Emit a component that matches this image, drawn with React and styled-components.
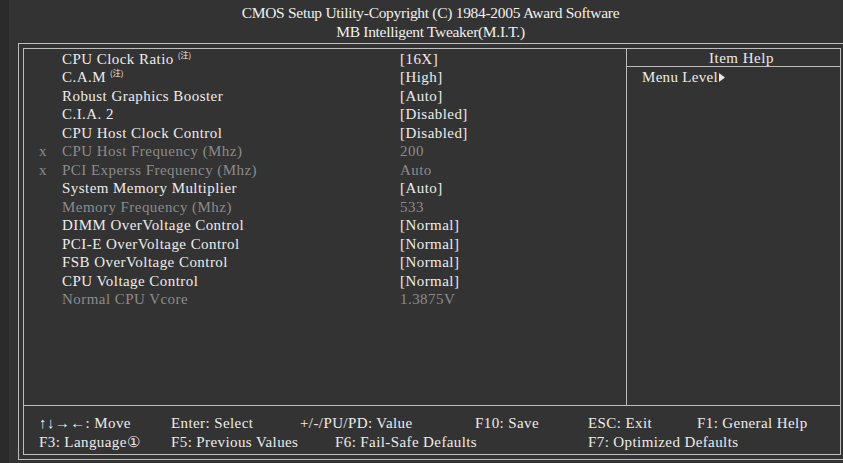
import React from 'react'
import styled, { createGlobalStyle } from 'styled-components'

const GlobalStyle = createGlobalStyle`
  html, body {
    margin: 0;
    padding: 0;
    background: #2b2b2b;
  }
  body {
    font-family: "Liberation Serif", "Times New Roman", serif;
    overflow: hidden;
  }
`

const rows = [
  { label: 'CPU Clock Ratio', note: true, value: '[16X]' },
  { label: 'C.A.M', note: true, value: '[High]' },
  { label: 'Robust Graphics Booster', value: '[Auto]' },
  { label: 'C.I.A. 2', value: '[Disabled]' },
  { label: 'CPU Host Clock Control', value: '[Disabled]' },
  { label: 'CPU Host Frequency (Mhz)', value: '200', dim: true, locked: true },
  { label: 'PCI Experss Frequency (Mhz)', value: 'Auto', dim: true, locked: true },
  { label: 'System Memory Multiplier', value: '[Auto]' },
  { label: 'Memory Frequency (Mhz)', value: '533', dim: true },
  { label: 'DIMM OverVoltage Control', value: '[Normal]' },
  { label: 'PCI-E OverVoltage Control', value: '[Normal]' },
  { label: 'FSB OverVoltage Control', value: '[Normal]' },
  { label: 'CPU Voltage Control', value: '[Normal]' },
  { label: 'Normal CPU Vcore', value: '1.3875V', dim: true },
]

const footer = [
  [
    { text: '↑↓→←: Move', w: 132 },
    { text: 'Enter: Select', w: 129 },
    { text: '+/-/PU/PD: Value', w: 175 },
    { text: 'F10: Save', w: 113 },
    { text: 'ESC: Exit', w: 109 },
    { text: 'F1: General Help' },
  ],
  [
    { text: 'F3: Language①', w: 132 },
    { text: 'F5: Previous Values', w: 164 },
    { text: 'F6: Fail-Safe Defaults', w: 253 },
    { text: 'F7: Optimized Defaults' },
  ],
]

const Arrow = () => (
  <svg width="6" height="9" viewBox="0 0 6 9">
    <path d="M0 0 L6 4.5 L0 9 Z" fill="#e8e8e8" />
  </svg>
)

export default function App() {
  return (
    <Screen>
      <GlobalStyle />
      <Header>
        <HeaderLine>CMOS Setup Utility-Copyright (C) 1984-2005 Award Software</HeaderLine>
        <HeaderLine>MB Intelligent Tweaker(M.I.T.)</HeaderLine>
      </Header>
      <OuterFrame>
        <InnerFrame>
          <Main>
            <Settings>
              {rows.map((r) => (
                <Row key={r.label} $dim={r.dim}>
                  <Mark>{r.locked ? 'x' : ''}</Mark>
                  <Label>
                    {r.label}
                    {r.note && <Note>(注)</Note>}
                  </Label>
                  <Value>{r.value}</Value>
                </Row>
              ))}
            </Settings>
            <Help>
              <HelpTitle>Item Help</HelpTitle>
              <HelpBody>
                Menu Level<Arrow />
              </HelpBody>
            </Help>
          </Main>
          <Footer>
            {footer.map((line, i) => (
              <FooterLine key={i}>
                {line.map((c) => (
                  <FooterCell key={c.text} $w={c.w}>{c.text}</FooterCell>
                ))}
              </FooterLine>
            ))}
          </Footer>
        </InnerFrame>
      </OuterFrame>
    </Screen>
  )
}

const Screen = styled.div`
  width: 834px;
  height: 463px;
  margin-left: 9px;
  background: #333333;
  color: #ececec;
  display: flex;
  flex-direction: column;
  overflow: hidden;
`

const Header = styled.div`
  height: 43px;
  padding-top: 4px;
  box-sizing: border-box;
  display: flex;
  flex-direction: column;
  align-items: center;
  margin-right: -9px;
`

const HeaderLine = styled.div`
  font-size: 15.5px;
  line-height: 18.5px;
  color: #f0f0f0;
  letter-spacing: -0.3px;
`

const OuterFrame = styled.div`
  margin-left: 9px;
  margin-right: -12px;
  height: 417px;
  border: 1px solid #bdbdbd;
  padding: 4px;
  box-sizing: border-box;
  display: flex;
`

const InnerFrame = styled.div`
  width: 818px;
  height: 407px;
  box-sizing: border-box;
  border: 1px solid #bdbdbd;
  display: flex;
  flex-direction: column;
`

const Main = styled.div`
  flex: 1;
  display: flex;
  border-bottom: 1px solid #bdbdbd;
`

const Settings = styled.div`
  width: 602px;
  border-right: 1px solid #bdbdbd;
  padding-top: 0.5px;
`

const Row = styled.div`
  display: flex;
  height: 18.5px;
  line-height: 18.5px;
  font-size: 15px;
  letter-spacing: 0.45px;
  color: ${(p) => (p.$dim ? '#8b8b8b' : '#ececec')};
`

const Mark = styled.span`
  width: 38px;
  padding-left: 15px;
  box-sizing: border-box;
`

const Label = styled.span`
  width: 338px;
  white-space: nowrap;
`

const Note = styled.sup`
  font-family: "Noto Sans CJK SC", sans-serif;
  font-size: 8px;
  letter-spacing: 0;
  margin-left: 4px;
  vertical-align: 6px;
  line-height: 0;
`

const Value = styled.span`
  white-space: nowrap;
`

const Help = styled.div`
  flex: 1;
  display: flex;
  flex-direction: column;
`

const HelpTitle = styled.div`
  height: 17px;
  line-height: 19px;
  text-align: center;
  padding-left: 16px;
  font-size: 15px;
  letter-spacing: 0.5px;
  border-bottom: 1px solid #bdbdbd;
`

const HelpBody = styled.div`
  padding: 1px 0 0 15px;
  line-height: 18.5px;
  font-size: 15px;
  letter-spacing: 0.3px;
  display: flex;
  align-items: center;
  gap: 1px;
`

const Footer = styled.div`
  height: 48px;
  box-sizing: border-box;
  padding: 8px 0 0 15px;
`

const FooterLine = styled.div`
  display: flex;
  height: 18.5px;
  line-height: 18.5px;
  font-size: 15px;
  letter-spacing: 0.4px;
`

const FooterCell = styled.span`
  white-space: nowrap;
  ${(p) => (p.$w ? `width: ${p.$w}px; flex-shrink: 0;` : '')}
`
